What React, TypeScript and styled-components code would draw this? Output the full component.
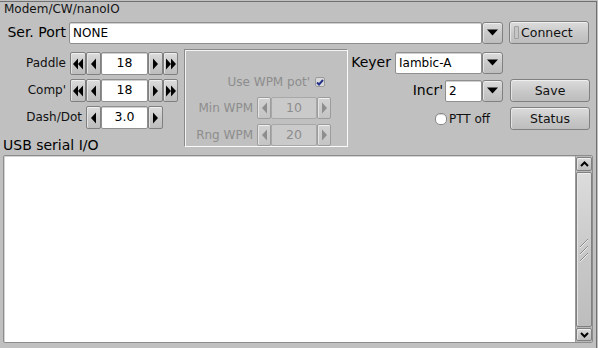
import styled, { createGlobalStyle, css } from 'styled-components';

const GlobalStyle = createGlobalStyle`
  html, body {
    margin: 0;
    padding: 0;
    background: #c0c0c0;
  }
  body {
    font-family: 'DejaVu Sans', Verdana, sans-serif;
    color: #000;
  }
  * {
    box-sizing: border-box;
  }
`;

const buttonFace = css`
  background: linear-gradient(#dcdcdc, #c8c8c8 55%, #bdbdbd);
  border: 1px solid #808080;
  border-radius: 3px;
  box-shadow: inset 0 1px 0 #efefef, inset 1px 0 0 #e4e4e4;
`;

const fieldFace = css`
  background: #fff;
  border: 1px solid #8f8f8f;
  border-radius: 2px;
  box-shadow: inset 0 1px 0 #cfcfcf;
`;

const Window = styled.div`
  width: 597px;
  height: 347px;
  margin-top: 1px;
  overflow: hidden;
  background: #c0c0c0;
  border-top: 1px solid #707070;
  border-right: 1px solid #707070;
`;

const TabTitle = styled.div`
  height: 19px;
  padding-left: 4px;
  font-size: 12px;
  line-height: 14px;
  color: #141414;
`;

const SerRow = styled.div`
  display: flex;
  align-items: center;
  height: 23px;
`;

const FieldLabel = styled.div<{ $w?: number }>`
  ${(p) => (p.$w ? `width: ${p.$w}px; text-align: right; padding-right: 3px;` : '')}
  font-size: 14px;
  line-height: 17px;
  white-space: nowrap;
`;

const Combo = styled.div<{ $field: number }>`
  display: grid;
  grid-template-columns: ${(p) => p.$field}px 21px;
  height: 22px;
`;

const ComboField = styled.div`
  ${fieldFace}
  padding-left: 3px;
  font-size: 12px;
  line-height: 20px;
  white-space: nowrap;
  overflow: hidden;
`;

const DropButton = styled.div`
  ${buttonFace}
  display: flex;
  align-items: center;
  justify-content: center;
`;

const PushButton = styled.div<{ $light?: boolean }>`
  ${buttonFace}
  width: 80px;
  height: 23px;
  display: flex;
  align-items: center;
  justify-content: ${(p) => (p.$light ? 'flex-start' : 'center')};
  gap: 2px;
  padding-left: ${(p) => (p.$light ? '4px' : '0')};
  font-size: 12.5px;
  line-height: 21px;
  color: #111;
`;

const LightBox = styled.span`
  width: 5px;
  height: 13px;
  border: 1px solid #a0a0a0;
  border-radius: 1px;
  background: #c6c6c6;
`;

const Main = styled.div`
  display: flex;
  align-items: flex-start;
  margin-top: 4px;
`;

const LeftCol = styled.div`
  width: 178px;
  padding-top: 4px;
  display: flex;
  flex-direction: column;
  gap: 4px;
`;

const CounterRow = styled.div<{ $cols: string; $h: number }>`
  display: grid;
  grid-template-columns: ${(p) => p.$cols};
  height: ${(p) => p.$h}px;
  flex-shrink: 0;
`;

const RowLabel = styled.div<{ $span?: number; $inactive?: boolean }>`
  grid-column: span ${(p) => p.$span ?? 1};
  text-align: right;
  padding-right: 4px;
  font-size: 12px;
  line-height: 22px;
  white-space: nowrap;
  color: ${(p) => (p.$inactive ? '#8d8d8d' : '#111')};
`;

const ArrowBtn = styled.div<{ $inactive?: boolean }>`
  ${buttonFace}
  border-radius: 2px;
  display: flex;
  align-items: center;
  justify-content: center;
  ${(p) =>
    p.$inactive &&
    css`
      border-color: #9c9c9c;
      background: linear-gradient(#d2d2d2, #c4c4c4);
    `}
`;

const ValueBox = styled.div<{ $inactive?: boolean }>`
  ${fieldFace}
  text-align: center;
  font-size: 12.5px;
  line-height: 20px;
  ${(p) =>
    p.$inactive &&
    css`
      background: #cacaca;
      border-color: #a8a8a8;
      box-shadow: none;
      color: #8d8d8d;
    `}
`;

const UsbLabel = styled.div`
  margin-top: 4px;
  padding-left: 3px;
  font-size: 14px;
  line-height: 17px;
  white-space: nowrap;
`;

const WpmGroup = styled.div`
  width: 164px;
  height: 98px;
  margin: 1px 0 0 6px;
  padding-top: 24px;
  overflow: hidden;
  border: 1px solid;
  border-color: #8a8a8a #fafafa #fafafa #8a8a8a;
  box-shadow: inset 1px 1px 0 #f4f4f4;
  display: flex;
  flex-direction: column;
  gap: 5px;
`;

const PotRow = styled.div`
  height: 18px;
  margin-bottom: 2px;
  display: flex;
  align-items: center;
  justify-content: flex-end;
  gap: 5px;
  padding-right: 22px;
  font-size: 12px;
  color: #8d8d8d;
`;

const CheckBox = styled.span`
  width: 10px;
  height: 10px;
  border: 1px solid #9a9a9a;
  border-radius: 2px;
  background: #dadada;
  display: flex;
  align-items: center;
  justify-content: center;
`;

const RightGrid = styled.div`
  margin: 3px 0 0 2px;
  display: grid;
  grid-template-columns: 153px 80px;
  grid-auto-rows: 23px;
  column-gap: 7px;
  row-gap: 5px;
`;

const Cell = styled.div<{ $col: number; $gap?: number; $pad?: number }>`
  grid-column: ${(p) => p.$col};
  display: flex;
  align-items: center;
  justify-content: flex-end;
  gap: ${(p) => p.$gap ?? 0}px;
  padding-right: ${(p) => p.$pad ?? 0}px;
`;

const RoundCheck = styled.span`
  width: 12px;
  height: 12px;
  border: 1px solid #8a8a8a;
  border-radius: 5px;
  background: #fff;
  box-shadow: inset 0 1px 0 #d0d0d0;
`;

const SmallText = styled.span`
  font-size: 12px;
  line-height: 16px;
  color: #111;
`;

const TextArea = styled.div`
  width: 590px;
  height: 188px;
  margin: 1px 0 0 3px;
  display: flex;
  border: 1px solid #8c8c8c;
  border-radius: 2px;
  background: #fff;
  box-shadow: inset 1px 1px 0 #d4d4d4;
`;

const TextBody = styled.div`
  flex: 1;
`;

const Scrollbar = styled.div`
  width: 17px;
  padding: 1px 0;
  display: flex;
  flex-direction: column;
  background: #b9b9b9;
  border-left: 1px solid #9a9a9a;
`;

const ScrollBtn = styled.div<{ $h: number }>`
  ${buttonFace}
  border-radius: 2px;
  height: ${(p) => p.$h}px;
  flex-shrink: 0;
  display: flex;
  align-items: center;
  justify-content: center;
`;

const Thumb = styled.div`
  ${buttonFace}
  border-radius: 2px;
  flex: 1;
  margin: 1px 0;
  display: flex;
  align-items: center;
  justify-content: center;
`;

function Tri({ dir, double, color = '#000' }: { dir: 'left' | 'right'; double?: boolean; color?: string }) {
  const w = double ? 10 : 5;
  const one = (x: number) =>
    dir === 'left' ? `${x + 5},0.5 ${x},6 ${x + 5},11.5` : `${x},0.5 ${x + 5},6 ${x},11.5`;
  return (
    <svg width={w} height={12} viewBox={`0 0 ${w} 12`}>
      <polygon points={one(0)} fill={color} />
      {double && <polygon points={one(5)} fill={color} />}
    </svg>
  );
}

function DownTri() {
  return (
    <svg width={11} height={7} viewBox="0 0 11 7">
      <polygon points="0,0.5 11,0.5 5.5,6.5" fill="#000" />
    </svg>
  );
}

function Chevron({ up }: { up?: boolean }) {
  return (
    <svg width={9} height={6} viewBox="0 0 9 6">
      <polyline
        points={up ? '1,5 4.5,1.5 8,5' : '1,1 4.5,4.5 8,1'}
        fill="none"
        stroke="#000"
        strokeWidth={2}
      />
    </svg>
  );
}

function Grip() {
  return (
    <svg width={10} height={24} viewBox="0 0 10 24">
      {[0, 7, 14].map((o) => (
        <g key={o}>
          <line x1={1} y1={9 + o} x2={9} y2={1 + o} stroke="#8a8a8a" />
          <line x1={1} y1={10 + o} x2={9} y2={2 + o} stroke="#ececec" />
        </g>
      ))}
    </svg>
  );
}

interface CounterProps {
  label: string;
  value: string;
  fast?: boolean;
  inactive?: boolean;
}

function MainCounter({ label, value, fast }: CounterProps) {
  return (
    <CounterRow $cols="70px 16px 15px 47px 15px 15px" $h={23}>
      <RowLabel $span={fast ? 1 : 2}>{label}</RowLabel>
      {fast && (
        <ArrowBtn>
          <Tri dir="left" double />
        </ArrowBtn>
      )}
      <ArrowBtn>
        <Tri dir="left" />
      </ArrowBtn>
      <ValueBox>{value}</ValueBox>
      <ArrowBtn>
        <Tri dir="right" />
      </ArrowBtn>
      {fast && (
        <ArrowBtn>
          <Tri dir="right" double />
        </ArrowBtn>
      )}
    </CounterRow>
  );
}

function WpmCounter({ label, value }: CounterProps) {
  return (
    <CounterRow $cols="72px 14px 46px 14px" $h={22}>
      <RowLabel $inactive>{label}</RowLabel>
      <ArrowBtn $inactive>
        <Tri dir="left" color="#8d8d8d" />
      </ArrowBtn>
      <ValueBox $inactive>{value}</ValueBox>
      <ArrowBtn $inactive>
        <Tri dir="right" color="#8d8d8d" />
      </ArrowBtn>
    </CounterRow>
  );
}

function ComboBox({ value, field }: { value: string; field: number }) {
  return (
    <Combo $field={field}>
      <ComboField>{value}</ComboField>
      <DropButton>
        <DownTri />
      </DropButton>
    </Combo>
  );
}

export default function App() {
  return (
    <>
      <GlobalStyle />
      <Window>
        <TabTitle>Modem/CW/nanoIO</TabTitle>
        <SerRow>
          <FieldLabel $w={69}>Ser. Port</FieldLabel>
          <ComboBox value="NONE" field={413} />
          <PushButton $light style={{ marginLeft: 6 }}>
            <LightBox />
            Connect
          </PushButton>
        </SerRow>
        <Main>
          <LeftCol>
            <MainCounter label="Paddle" value="18" fast />
            <MainCounter label="Comp'" value="18" fast />
            <MainCounter label="Dash/Dot" value="3.0" />
            <UsbLabel>USB serial I/O</UsbLabel>
          </LeftCol>
          <WpmGroup>
            <PotRow>
              Use WPM pot'
              <CheckBox>
                <svg width={8} height={7} viewBox="0 0 8 7">
                  <polyline points="1,3.5 3,5.5 7,1" fill="none" stroke="#26338c" strokeWidth={2} />
                </svg>
              </CheckBox>
            </PotRow>
            <WpmCounter label="Min WPM" value="10" />
            <WpmCounter label="Rng WPM" value="20" />
          </WpmGroup>
          <RightGrid>
            <Cell $col={1} $gap={4}>
              <FieldLabel>Keyer</FieldLabel>
              <ComboBox value="Iambic-A" field={87} />
            </Cell>
            <Cell $col={1} $gap={2}>
              <FieldLabel>Incr'</FieldLabel>
              <ComboBox value="2" field={37} />
            </Cell>
            <Cell $col={2}>
              <PushButton>Save</PushButton>
            </Cell>
            <Cell $col={1} $gap={2} $pad={13}>
              <RoundCheck />
              <SmallText>PTT off</SmallText>
            </Cell>
            <Cell $col={2}>
              <PushButton>Status</PushButton>
            </Cell>
          </RightGrid>
        </Main>
        <TextArea>
          <TextBody />
          <Scrollbar>
            <ScrollBtn $h={14}>
              <Chevron up />
            </ScrollBtn>
            <Thumb>
              <Grip />
            </Thumb>
            <ScrollBtn $h={13}>
              <Chevron />
            </ScrollBtn>
          </Scrollbar>
        </TextArea>
      </Window>
    </>
  );
}
